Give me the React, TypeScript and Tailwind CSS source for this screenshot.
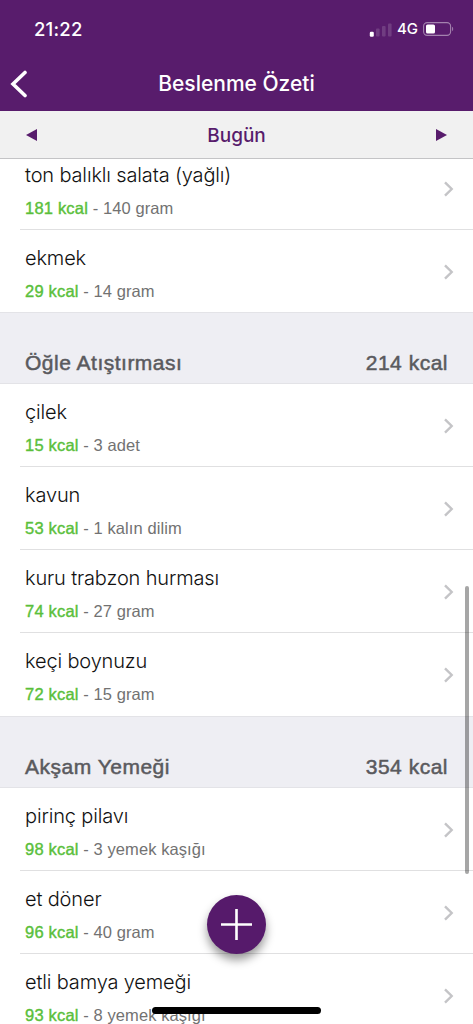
type Food = {
  name: string;
  kcal: number;
  amount: string;
};

type Meal = {
  title?: string;
  total?: number;
  foods: Food[];
};

const MEALS: Meal[] = [
  {
    foods: [
      { name: "ton balıklı salata (yağlı)", kcal: 181, amount: "140 gram" },
      { name: "ekmek", kcal: 29, amount: "14 gram" },
    ],
  },
  {
    title: "Öğle Atıştırması",
    total: 214,
    foods: [
      { name: "çilek", kcal: 15, amount: "3 adet" },
      { name: "kavun", kcal: 53, amount: "1 kalın dilim" },
      { name: "kuru trabzon hurması", kcal: 74, amount: "27 gram" },
      { name: "keçi boynuzu", kcal: 72, amount: "15 gram" },
    ],
  },
  {
    title: "Akşam Yemeği",
    total: 354,
    foods: [
      { name: "pirinç pilavı", kcal: 98, amount: "3 yemek kaşığı" },
      { name: "et döner", kcal: 96, amount: "40 gram" },
      { name: "etli bamya yemeği", kcal: 93, amount: "8 yemek kaşığı" },
    ],
  },
];

function StatusBar() {
  return (
    <div className="flex h-14 items-center justify-between pt-[3px] pl-[34px] pr-[18px]">
      <span className="text-[18.5px] font-medium tracking-[0.2px]">21:22</span>
      <div className="flex items-center">
        <svg width="23" height="14" viewBox="0 0 23 14" fill="#fff">
          <rect x="0.8" y="8.8" width="4" height="5" rx="1.2" />
          <rect x="7" y="5.5" width="3.6" height="8" rx="1" opacity="0.15" />
          <rect x="13" y="3" width="3.6" height="10.5" rx="1" opacity="0.15" />
          <rect x="19" y="0.5" width="3.6" height="13" rx="1" opacity="0.15" />
        </svg>
        <span className="ml-[5px] text-[15px] font-medium">4G</span>
        <svg className="-mt-px ml-[5px]" width="32" height="14" viewBox="0 0 32 14">
          <rect x="0.6" y="0.6" width="27" height="12.8" rx="3.6" fill="none" stroke="#fff" strokeOpacity="0.45" strokeWidth="1.1" />
          <rect x="3" y="2.4" width="9" height="9.2" rx="1.6" fill="#fff" />
          <path d="M29.2 4.8c1.3.6 1.3 3.8 0 4.4z" fill="#fff" opacity="0.5" />
        </svg>
      </div>
    </div>
  );
}

function NavBar() {
  return (
    <div className="grid h-[55px] grid-cols-[60px_1fr_60px] items-center">
      <svg className="ml-[10px]" width="18" height="28" viewBox="0 0 18 28" fill="none">
        <path d="M15 2.5L3 14l12 11.5" stroke="#fff" strokeWidth="3.6" strokeLinecap="round" />
      </svg>
      <h1 className="text-center text-[21px] font-medium whitespace-nowrap">Beslenme Özeti</h1>
    </div>
  );
}

function DayPicker() {
  return (
    <div className="flex h-12 items-center justify-between border-b border-[#c4c4c6] bg-[#f1f1f1] px-[26px] text-[#581c6c]">
      <svg width="11" height="12" viewBox="0 0 11 12" fill="currentColor">
        <path d="M0 6L11 0v12z" />
      </svg>
      <span className="pt-[3px] text-[19px] font-medium">Bugün</span>
      <svg width="11" height="12" viewBox="0 0 11 12" fill="currentColor">
        <path d="M11 6L0 0v12z" />
      </svg>
    </div>
  );
}

function FoodRow({ food }: { food: Food }) {
  return (
    <li className="ml-5 flex h-[83px] items-center justify-between border-b border-[#e0e0e1] pl-[5px] pr-[19px] last:border-transparent">
      <div className="pt-[7px]">
        <div className="font-['Inter',sans-serif] text-[20px] leading-[30px] font-light tracking-[-0.15px] text-[#111]">
          {food.name}
        </div>
        <div className="mt-[3px] text-[16.5px] leading-[30px] tracking-[0.08px] text-[#727272]">
          <span className="tracking-[0.2px] text-[#5abf3b] [-webkit-text-stroke:0.4px_#5abf3b]">{food.kcal} kcal</span>
          {" - "}
          {food.amount}
        </div>
      </div>
      <svg className="mt-px" width="11" height="16" viewBox="0 0 11 16" fill="none">
        <path d="M2 1.3L8.7 8 2 14.7" stroke="#c4c4c7" strokeWidth="2.4" />
      </svg>
    </li>
  );
}

function MealSection({ meal }: { meal: Meal }) {
  return (
    <section className="font-['Liberation_Sans',sans-serif]">
      {meal.title && (
        <div className="relative flex h-[72px] items-end justify-between border-y border-[#e3e3e7] bg-[#eeeef3] px-[25px] pb-[5px] text-[21px] leading-[30px] tracking-[0.5px] text-[#5a5a5e] [-webkit-text-stroke:0.5px_#5a5a5e]">
          <h2>{meal.title}</h2>
          <span>{meal.total} kcal</span>
        </div>
      )}
      <ul>
        {meal.foods.map((food) => (
          <FoodRow key={food.name} food={food} />
        ))}
      </ul>
    </section>
  );
}

export default function App() {
  return (
    <div className="relative flex h-[1024px] w-[473px] flex-col overflow-hidden bg-white font-['Inter',sans-serif]">
      <header className="relative z-10 shrink-0">
        <div className="bg-[#581c6c] text-white">
          <StatusBar />
          <NavBar />
        </div>
        <DayPicker />
      </header>

      <main className="-mt-3 min-h-0 flex-1">
        <div className="-mb-px">
          <MealSection meal={MEALS[0]} />
        </div>
        <MealSection meal={MEALS[1]} />
        <MealSection meal={MEALS[2]} />
      </main>

      <div className="absolute top-[586px] right-[4px] h-[288px] w-1 rounded-full bg-black/35" />

      <button
        aria-label="Ekle"
        className="absolute top-[895px] left-[207px] flex size-[59px] items-center justify-center rounded-full bg-[#561a6b] shadow-[0_6px_10px_rgba(0,0,0,0.4)]"
      >
        <svg width="31" height="31" viewBox="0 0 31 31" stroke="#fff" strokeWidth="2.6">
          <path d="M15.5 0v31M0 15.5h31" />
        </svg>
      </button>

      <div className="absolute top-[1007px] left-[152px] h-[7px] w-[169px] rounded-full bg-black" />
    </div>
  );
}
